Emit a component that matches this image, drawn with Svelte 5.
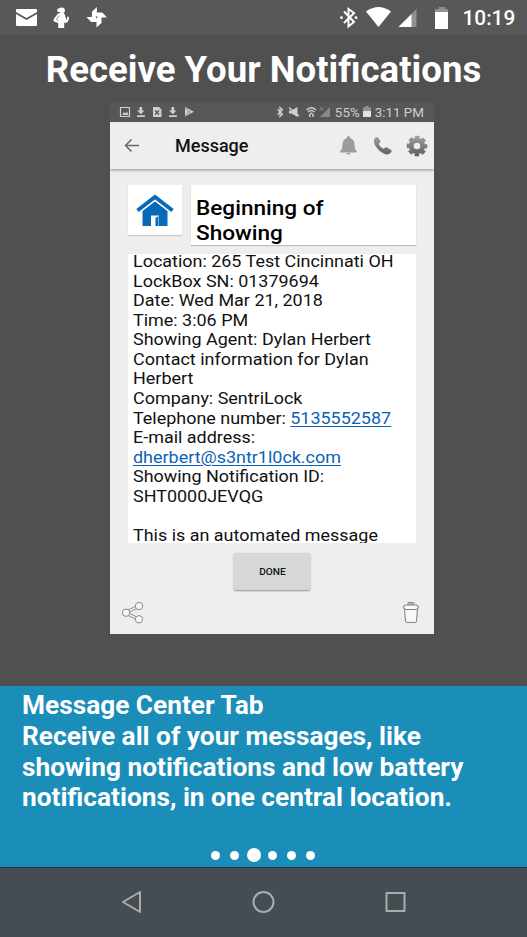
<script lang="ts">
  interface Line {
    label: string;
    link?: string;
  }

  const message: Line[] = [
    { label: 'Location: 265 Test Cincinnati OH' },
    { label: 'LockBox SN: 01379694' },
    { label: 'Date: Wed Mar 21, 2018' },
    { label: 'Time: 3:06 PM' },
    { label: 'Showing Agent: Dylan Herbert' },
    { label: 'Contact information for Dylan' },
    { label: 'Herbert' },
    { label: 'Company: SentriLock' },
    { label: 'Telephone number: ', link: '5135552587' },
    { label: 'E-mail address:' },
    { label: '', link: 'dherbert@s3ntr1l0ck.com' },
    { label: 'Showing Notification ID:' },
    { label: 'SHT0000JEVQG' },
    { label: '' },
    { label: 'This is an automated message' }
  ];

  const caption = [
    'Message Center Tab',
    'Receive all of your messages, like',
    'showing notifications and low battery',
    'notifications, in one central location.'
  ];

  const pages = [0, 1, 2, 3, 4, 5];
  let current = 2;
</script>

<div class="Screen">
  <header class="StatusBar">
    <svg class="StatusIcons" width="110" height="35" viewBox="0 0 110 35">
      <g fill="#fff">
        <path d="M17 9h19q1 0 1 1v2l-10.500 6L16 12v-2q0-1 1-1z" />
        <path d="M16 14l10.500 6L37 14v11q0 1-1 1H17q-1 0-1-1z" />
        <circle cx="62" cy="10.300" r="2.900" />
        <path d="M57.500 9l3-1.500.5 3-1.500 1.500-2.500-.5z" />
        <path d="M58 13.500l5-1q2.500 1.500 2.500 4.500l.8 3 1-1.500-.5-1.500 1.500-.5.900 1.500-1.500 4-2 1-1.500-.5V28h-6v-5L54 21.500q-.8-1-.3-2.500z" />
        {#each [0, 90, 180, 270] as angle}
          <path d="M96.900 7v10.500h-5v-5.800z" transform="rotate({angle} 96.700 17.300)" />
        {/each}
      </g>
      <path d="M59 15.500l-2.500 4 1.700 1.500" fill="none" stroke="#777" stroke-width=".8" />
      <circle cx="96.700" cy="17.300" r="1" fill="#777" />
    </svg>
    <svg class="StatusIcons" width="130" height="35" viewBox="0 0 130 35">
      <path d="M4 11.500l10 10.500-5.500 4.500V9l5.500 4-10 10" fill="none" stroke="#fff" stroke-width="2" />
      <circle cx="1.500" cy="17.700" r="1.400" fill="#fff" />
      <circle cx="16" cy="17.700" r="1.400" fill="#fff" />
      <path d="M26 11.500Q38.500 2.500 51 11.500L38.500 27z" fill="#fff" />
      <path d="M76.500 9v18H58.500z" fill="#909090" />
      <path d="M71.500 14V27H58.500z" fill="#fff" />
      <path d="M99 7h6v2h3v3H95V9h4z" fill="#909090" />
      <path d="M95 12h13v17H95z" fill="#fff" />
    </svg>
    <span class="Clock">10:19</span>
  </header>

  <main class="Tour">
    <h1>Receive Your Notifications</h1>

    <section class="Phone">
      <div class="PhoneStatus">
        <svg width="80" height="20" viewBox="0 0 80 20" fill="#cecece">
          <path d="M1.500 5.500h9v9h-9z" fill="none" stroke="#cecece" stroke-width="1.200" />
          <path d="M3 13l2-3 1.500 1.500L8 9.500 9.500 13z" />
          <path d="M20.500 5h2.600v3.500h2.400l-3.700 3.700L18 8.500h2.500zM18 13.300h8V15h-8z" />
          <path d="M34 5h6l2.500 2.500V15H34z" />
          <path d="M36 8.500l4 4m0-4l-4 4" stroke="#555" stroke-width="1.300" />
          <path d="M52.500 5h2.600v3.500h2.400l-3.700 3.700L50 8.500h2.500zM50 13.300h8V15h-8z" />
          <path d="M66 5l9 4.800-9 4.800z" />
          <path d="M66.500 6l5 5.500m-5 2.500l5-5.500" stroke="#666" stroke-width=".6" />
        </svg>
        <div class="PhoneStatusRight">
          <svg width="54" height="20" viewBox="0 0 54 20" fill="none" stroke="#cecece">
            <path d="M1.500 7.500l5 4.700-2.500 2.300v-9l2.500 2.300-5 4.700" stroke-width="1.300" />
            <path d="M13 8.500h2.500L21.500 5v10l-6-3.500H13z" fill="#cecece" stroke="none" />
            <path d="M13 5.500l10 8.500" stroke-width="1.500" />
            <path d="M30.500 8Q35 3.500 40 8M32 10q3.200-3 6.500 0M34 11.700q1.300-1 2.600 0M33.800 12v3M37 12v3" stroke-width="1.500" />
            <path d="M54 5v10H44z" fill="#898989" stroke="none" />
            <path d="M44 5l3.500 3.500m0-3.500L44 8.500" stroke="#898989" />
          </svg>
          <span class="Percent">55%</span>
          <svg width="8" height="20" viewBox="0 0 8 20">
            <path d="M2.500 4h3v1.500H8V9H0V5.500h2.500z" fill="#929292" />
            <path d="M0 9h8v6H0z" fill="#e4e4e4" />
          </svg>
          <span class="PhoneTime">3:11 PM</span>
        </div>
      </div>

      <div class="Toolbar">
        <svg class="Back" width="16" height="14" viewBox="0 0 16 14">
          <path d="M7.500 .5l-6 6 6 6M1.500 6.500H15" fill="none" stroke="#686868" stroke-width="1.500" />
        </svg>
        <h2>Message</h2>
        <svg width="90" height="24" viewBox="0 0 90 24">
          <defs>
            <linearGradient id="metal" gradientUnits="userSpaceOnUse" x1="0" y1="2" x2="0" y2="22">
              <stop offset="0" stop-color="#a0a0a0" />
              <stop offset="1" stop-color="#5d5d5d" />
            </linearGradient>
          </defs>
          <path d="M10.500 2q1.500 0 1.700 2 4.300 1.500 4.300 7 0 4 2.300 6v1.500H2.200V17q2.300-2 2.300-6 0-5.500 4.300-7Q9 2 10.500 2zM8.500 19h4q-.3 1.500-2 1.500T8.500 19z" fill="#9b9ca0" />
          <path d="M36.500 4.500q1.500-2 3-1.500l3 4q.4 1.200-1.500 2.500-.7 1.300 3 4.500 1.500 1.200 2.500 0t2.500-.5l4.200 2.500q1.300 1-.5 2.700-2.500 2.800-6.500 1-7-3.400-9.500-9.200-1.500-4-.2-6z" fill="url(#metal)" />
          <circle cx="79" cy="12" r="5.800" fill="none" stroke="url(#metal)" stroke-width="5" />
          <circle cx="79" cy="12" r="9" fill="none" stroke="url(#metal)" stroke-width="2.600" stroke-dasharray="4.500 2.569" stroke-dashoffset="2.250" />
        </svg>
      </div>

      <div class="Content">
        <div class="Heading">
          <div class="HouseCard">
            <svg width="38" height="33" viewBox="0 0 38 33">
              <path d="M6.500 16.500L19 6.500l12.500 10V32h-25z" fill="#0969b9" />
              <path d="M1.500 17L19 3.500 36.500 17" fill="none" stroke="#fff" stroke-width="6" />
              <path d="M1.500 16.500L19 3l17.500 13.500" fill="none" stroke="#0969b9" stroke-width="3.800" />
              <path d="M15 21.500h8V33h-8z" fill="#fff" />
              <path d="M19.500 24l3-2v10h-3z" fill="#0969b9" />
            </svg>
          </div>
          <div class="Subject"><span>Beginning of<br />Showing</span></div>
        </div>

        <div class="Message">
          <div class="MessageText">
            {#each message as line}
              <p>{line.label}{#if line.link}<a href="#top">{line.link}</a>{/if}</p>
            {/each}
          </div>
        </div>

        <button class="Done"><span>DONE</span></button>

        <div class="Actions">
          <svg width="24" height="24" viewBox="0 0 24 24" fill="#f8f8f8" stroke="#898989" stroke-width="1">
            <path d="M5 11.500L18 5M5 12l13 6.500" stroke-width="3.400" />
            <path d="M5 11.500L18 5M5 12l13 6.500" stroke="#f4f4f4" stroke-width="1.400" />
            <circle cx="5" cy="11.700" r="3.700" />
            <circle cx="18" cy="5" r="3.700" />
            <circle cx="18" cy="18.300" r="3.700" />
          </svg>
          <svg width="18" height="24" viewBox="0 0 18 24" fill="#f8f8f8" stroke="#858585" stroke-width="1.100">
            <path d="M6 5V2.500Q6 1.500 7 1.500h4q1 0 1 1V5h-1.500V3h-3v2z" />
            <path d="M2.500 8l1 12q.2 1.500 1.700 1.500h7.600q1.500 0 1.700-1.500l1-12z" />
            <path d="M1.500 7q0-3 3-3h9q3 0 3 3-1 1.500-3 1.500h-9q-2 0-3-1.500z" />
          </svg>
        </div>
      </div>
    </section>
  </main>

  <section class="Caption">
    <div class="CaptionText">
      {#each caption as line}
        <p>{line}</p>
      {/each}
    </div>
    <div class="Dots">
      {#each pages as page}
        <button class="Dot" class:active={page === current} aria-label="Page {page + 1}" on:click={() => (current = page)}></button>
      {/each}
    </div>
  </section>

  <nav class="NavBar">
    <svg width="24" height="24" viewBox="0 0 24 24"><path d="M3 12L20 2v20z" /></svg>
    <svg width="24" height="24" viewBox="0 0 24 24"><circle cx="11.500" cy="12" r="10" /></svg>
    <svg width="24" height="24" viewBox="0 0 24 24"><path d="M3.500 3h18v18h-18z" /></svg>
  </nav>
</div>

<style>
  :global(body) {
    margin: 0;
    background: #505050;
  }

  .Screen {
    width: 527px;
    height: 937px;
    display: flex;
    flex-direction: column;
    overflow: hidden;
    font-family: Roboto, sans-serif;
    background: #505050;
  }

  svg {
    display: block;
    flex: none;
  }

  h1,
  h2,
  p {
    margin: 0;
  }

  .StatusBar {
    height: 35px;
    flex: none;
    display: flex;
    background: #585858;
    color: #fff;
  }

  .StatusIcons + .StatusIcons {
    margin-left: 230px;
  }

  .Clock {
    margin-left: -7.500px;
    font-size: 20.800px;
    font-weight: 500;
    line-height: 37px;
    white-space: nowrap;
  }

  .Tour {
    height: 651px;
    flex: none;
    display: flex;
    flex-direction: column;
    align-items: center;
  }

  h1 {
    height: 67px;
    color: #fff;
    font-size: 36.600px;
    font-weight: 700;
    line-height: 69px;
    white-space: nowrap;
  }

  .Phone {
    width: 324px;
    height: 532px;
    margin-left: 110px;
    align-self: flex-start;
    display: flex;
    flex-direction: column;
    background: #eee;
  }

  .PhoneStatus {
    height: 20px;
    padding: 0 10px 0 9px;
    display: flex;
    justify-content: space-between;
    background: #575757;
    color: #cecece;
    font-size: 13.400px;
    line-height: 21px;
  }

  .PhoneStatusRight {
    display: flex;
    white-space: nowrap;
  }

  .Percent {
    margin: 0 3px 0 5px;
  }

  .PhoneTime {
    margin-left: 4px;
  }

  .Toolbar {
    height: 47px;
    padding: 0 6px 0 14px;
    display: flex;
    align-items: center;
    background: #eee;
    box-shadow: 0 1px 3px rgba(0, 0, 0, 0.4);
    clip-path: inset(0 0 -5px 0);
  }

  h2 {
    margin-left: 35px;
    margin-right: auto;
    font-size: 18px;
    font-weight: 500;
    color: #111;
  }

  .Content {
    flex: 1;
    display: flex;
    flex-direction: column;
    padding: 16px 18px 0;
  }

  .Heading {
    display: flex;
    align-items: flex-start;
    gap: 9px;
  }

  .HouseCard {
    width: 54px;
    height: 50px;
    display: flex;
    align-items: center;
    justify-content: center;
    background: #fff;
    box-shadow: 0 1px 1px rgba(0, 0, 0, 0.14);
  }

  .Subject {
    width: 225px;
    height: 60px;
    background: #fff;
    box-shadow: 0 1px 1px rgba(0, 0, 0, 0.2);
    font-size: 21px;
    font-weight: 500;
    line-height: 24.500px;
    color: #000;
  }

  .Subject span {
    display: block;
    width: 180px;
    padding: 11px 0 0 5px;
    transform-origin: 5px 0;
    transform: scaleX(1.075);
  }

  .Message {
    height: 289px;
    margin-top: 9px;
    background: #fff;
    clip-path: inset(-3px 0 0 0);
  }

  .MessageText {
    padding-left: 5px;
    margin-top: -2px;
    width: 260px;
    color: #111;
    font-size: 16.700px;
    line-height: 19.570px;
    white-space: nowrap;
    transform-origin: 5px 0;
    transform: scaleX(1.075);
  }

  .Message::before {
    content: '';
    display: table;
  }

  .MessageText p {
    height: 19.570px;
  }

  a {
    color: #0b62b8;
    text-decoration: underline;
    text-decoration-thickness: 1px;
    text-underline-offset: 2px;
  }

  .Done {
    width: 76px;
    height: 37px;
    margin: 10px 0 0 106px;
    padding: 0;
    border: 0;
    border-radius: 2px;
    background: #d6d8d7;
    box-shadow: 0 1px 2px rgba(0, 0, 0, 0.4);
    color: #111;
    font-family: inherit;
    font-size: 9.500px;
    font-weight: 500;
  }

  .Done span {
    display: inline-block;
    transform: scaleX(1.07);
  }

  .Actions {
    display: flex;
    justify-content: space-between;
    margin: 11px -4px 0 -7px;
  }

  .Caption {
    height: 181px;
    flex: none;
    display: flex;
    flex-direction: column;
    background: #1b8db9;
    color: #fff;
  }

  .CaptionText {
    height: 158px;
    padding: 4px 0 0 22px;
    font-size: 26.250px;
    font-weight: 700;
    line-height: 30.800px;
    white-space: nowrap;
    box-sizing: border-box;
  }

  .Dots {
    height: 22px;
    margin-right: 1px;
    display: flex;
    align-items: center;
    justify-content: center;
    gap: 10px;
  }

  .Dot {
    width: 9px;
    height: 9px;
    padding: 0;
    border: 0;
    border-radius: 50%;
    background: #fff;
  }

  .Dot.active {
    width: 14px;
    height: 14px;
    margin: 0 -2.500px;
  }

  .NavBar {
    height: 70px;
    flex: none;
    box-sizing: border-box;
    border-top: 1px solid #253238;
    padding: 0 120px 1px;
    display: flex;
    align-items: center;
    justify-content: space-between;
    background: #454c52;
    fill: none;
    stroke: #a9adb0;
    stroke-width: 2;
    stroke-linejoin: round;
  }
</style>
